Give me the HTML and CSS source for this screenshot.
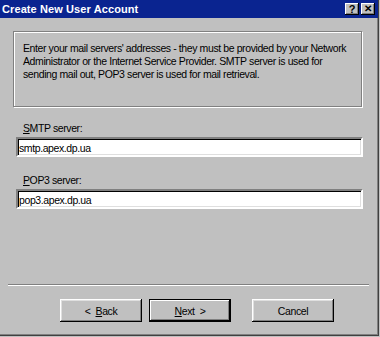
FILE: index.html
```html
<!DOCTYPE html>
<html lang="en">
<head>
    <meta charset="UTF-8">
    <title>Create New User Account</title>
    <link rel="stylesheet" href="styles.css">
</head>
<body>
    <div class="window">
        <div class="titlebar">
            <span class="title">Create New User Account</span>
            <div class="title-buttons">
                <span class="tbtn">?</span>
                <span class="tbtn close">&#x2715;</span>
            </div>
        </div>

        <div class="info-box">
            <p>Enter your mail servers' addresses - they must be provided by your Network<br>
            Administrator or the Internet Service Provider. SMTP server is used for<br>
            sending mail out, POP3 server is used for mail retrieval.</p>
        </div>

        <div class="field">
            <label for="smtp"><u>S</u>MTP server:</label>
            <input type="text" id="smtp" class="text-input" value="smtp.apex.dp.ua">
        </div>

        <div class="field second">
            <label for="pop3"><u>P</u>OP3 server:</label>
            <input type="text" id="pop3" class="text-input" value="pop3.apex.dp.ua">
        </div>

        <div class="separator"></div>

        <div class="buttons">
            <button class="btn">&lt;&nbsp;&nbsp;<u>B</u>ack</button>
            <button class="btn default"><u>N</u>ext&nbsp;&nbsp;&gt;</button>
            <button class="btn cancel">Cancel</button>
        </div>
    </div>
</body>
</html>
```

FILE: styles.css
```css
body {
    margin: 0;
    background: #c0c0c0;
    font-family: 'Liberation Sans', Arial, sans-serif;
    font-size: 10.5px;
    letter-spacing: -0.4px;
    color: #000;
}

.window {
    width: 378px;
    height: 335px;
    background: #c0c0c0;
    border-right: 1px solid #404040;
    border-bottom: 1px solid #404040;
    box-shadow: inset -1px -1px 0 #808080;
    overflow: hidden;
}

.titlebar {
    height: 18px;
    background: #0a2490;
    color: #fff;
    display: flex;
    align-items: center;
    justify-content: space-between;
    padding: 0 3px 0 2px;
}

.title {
    font-weight: bold;
    font-size: 11px;
    letter-spacing: 0.1px;
}

.title-buttons {
    display: flex;
    gap: 2px;
}

.tbtn {
    width: 14px;
    height: 12px;
    background: #c0c0c0;
    color: #000;
    font-size: 11px;
    font-weight: bold;
    line-height: 12px;
    letter-spacing: 0;
    text-align: center;
    box-shadow: inset -1px -1px 0 #000, inset 1px 1px 0 #fff, inset -2px -2px 0 #808080;
}

.tbtn.close {
    font-size: 10px;
}

.info-box {
    box-sizing: border-box;
    margin: 13px 0 0 13px;
    width: 349px;
    height: 76px;
    border: 1px solid #808080;
    box-shadow: 1px 1px 0 #fff, inset 1px 1px 0 #fff;
}

.info-box p {
    margin: 10px 2px 0 9px;
    line-height: 13px;
    white-space: nowrap;
}

.field {
    margin-left: 16px;
}

.field label {
    display: block;
    padding: 15px 0 2px 7px;
    line-height: 13px;
}

.field.second label {
    padding-top: 17px;
}

.text-input {
    display: block;
    box-sizing: border-box;
    width: 347px;
    height: 20px;
    margin: 0;
    padding: 1px 1px 0;
    border: 2px solid;
    border-color: #808080 #fff #fff #808080;
    box-shadow: inset 1px 1px 0 #000, inset -1px -1px 0 #dfdfdf;
    background: #fff;
    font-family: 'Liberation Sans', Arial, sans-serif;
    font-size: 10.5px;
    letter-spacing: -0.4px;
    color: #000;
    outline: none;
}

.separator {
    margin: 75px 0 0 8px;
    width: 361px;
    height: 0;
    border-top: 1px solid #808080;
    border-bottom: 1px solid #fff;
}

.buttons {
    display: flex;
    margin: 13px 0 0 60px;
}

.btn {
    width: 82px;
    height: 23px;
    margin: 0 7px 0 0;
    padding: 0;
    background: #c0c0c0;
    border: none;
    box-shadow: inset -1px -1px 0 #000, inset 1px 1px 0 #fff, inset -2px -2px 0 #808080, inset 2px 2px 0 #dfdfdf;
    font-family: 'Liberation Sans', Arial, sans-serif;
    font-size: 10.5px;
    letter-spacing: -0.4px;
    color: #000;
}

.btn.default {
    box-shadow: inset 0 0 0 1px #000, inset -2px -2px 0 #000, inset 2px 2px 0 #fff, inset -3px -3px 0 #808080;
}

.btn.cancel {
    margin-left: 14px;
}
```
